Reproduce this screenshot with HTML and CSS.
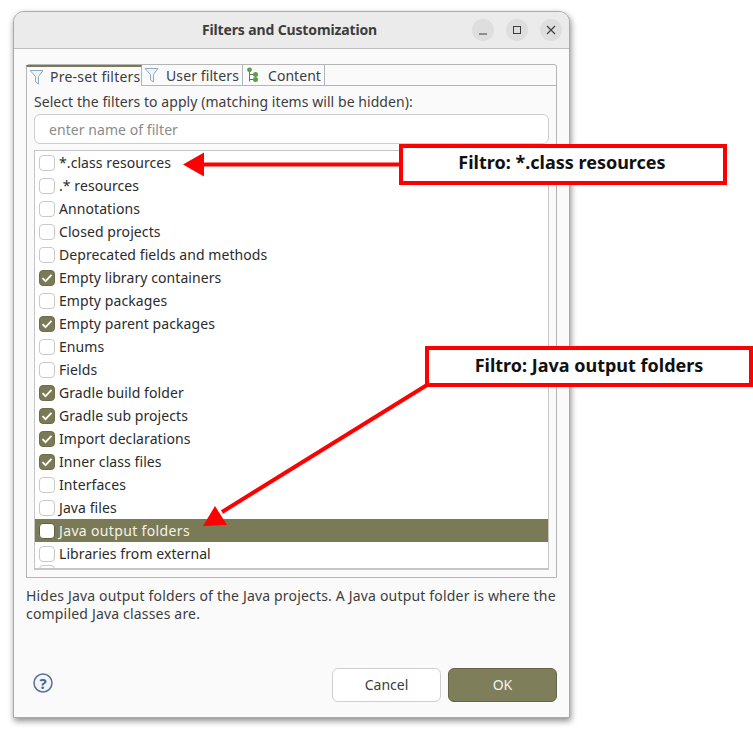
FILE: index.html
```html
<!DOCTYPE html>
<html lang="en">
<head>
<meta charset="utf-8">
<title>Filters and Customization</title>
<link rel="stylesheet" href="styles.css">
</head>
<body>
<div class="dialog">
  <header class="titlebar">
    <h1 class="title">Filters and Customization</h1>
    <div class="winbtns">
      <span class="winbtn"><svg width="12" height="12" viewBox="0 0 12 12"><path d="M2 10h8" stroke="#3d3d3d" stroke-width="1.2"/></svg></span>
      <span class="winbtn"><svg width="12" height="12" viewBox="0 0 12 12"><rect x="2.5" y="2.5" width="7" height="7" fill="none" stroke="#3d3d3d"/></svg></span>
      <span class="winbtn"><svg width="12" height="12" viewBox="0 0 12 12"><path d="M2 2l8 8M10 2l-8 8" stroke="#3d3d3d" stroke-width="1.1"/></svg></span>
    </div>
  </header>
  <main class="content">
    <section class="tabfolder">
      <div class="tabs">
        <div class="tab tab-active"><svg class="ticon" width="16" height="16" viewBox="0 0 16 16"><path d="M1 1.5h13L9.5 7.5v7.5l-3-2V7.5z" fill="#eef4fa" stroke="#8eabc4"/></svg>Pre-set filters</div>
        <div class="tab tab-user"><svg class="ticon" width="16" height="16" viewBox="0 0 16 16"><path d="M1 1.5h13L9.5 7.5v7.5l-3-2V7.5z" fill="#eef4fa" stroke="#8eabc4"/></svg>User filters</div>
        <div class="tab tab-content"><svg class="ticon ticon-tree" width="14" height="16" viewBox="0 0 14 16"><path d="M3.5 3v11.5M3.5 7.5h5M3.5 12.5h5" stroke="#6d6d6d" fill="none"/><circle cx="3.5" cy="2.8" r="2.4" fill="#5c9e46"/><circle cx="9.5" cy="7.5" r="2.5" fill="#5c9e46"/><circle cx="9.5" cy="12.5" r="2.5" fill="#5c9e46"/></svg>Content</div>
      </div>
      <div class="tabbody">
        <p class="prompt">Select the filters to apply (matching items will be hidden):</p>
        <input class="search" type="text" placeholder="enter name of filter">
        <ul class="list">
          <li class="row"><span class="cb"></span>*.class resources</li>
          <li class="row"><span class="cb"></span>.* resources</li>
          <li class="row"><span class="cb"></span>Annotations</li>
          <li class="row"><span class="cb"></span>Closed projects</li>
          <li class="row"><span class="cb"></span>Deprecated fields and methods</li>
          <li class="row"><span class="cb cb-on"><svg width="16" height="16" viewBox="0 0 16 16"><path d="M3.5 8.2l3 3 6-6.4" fill="none" stroke="#fff" stroke-width="1.8"/></svg></span>Empty library containers</li>
          <li class="row"><span class="cb"></span>Empty packages</li>
          <li class="row"><span class="cb cb-on"><svg width="16" height="16" viewBox="0 0 16 16"><path d="M3.5 8.2l3 3 6-6.4" fill="none" stroke="#fff" stroke-width="1.8"/></svg></span>Empty parent packages</li>
          <li class="row"><span class="cb"></span>Enums</li>
          <li class="row"><span class="cb"></span>Fields</li>
          <li class="row"><span class="cb cb-on"><svg width="16" height="16" viewBox="0 0 16 16"><path d="M3.5 8.2l3 3 6-6.4" fill="none" stroke="#fff" stroke-width="1.8"/></svg></span>Gradle build folder</li>
          <li class="row"><span class="cb cb-on"><svg width="16" height="16" viewBox="0 0 16 16"><path d="M3.5 8.2l3 3 6-6.4" fill="none" stroke="#fff" stroke-width="1.8"/></svg></span>Gradle sub projects</li>
          <li class="row"><span class="cb cb-on"><svg width="16" height="16" viewBox="0 0 16 16"><path d="M3.5 8.2l3 3 6-6.4" fill="none" stroke="#fff" stroke-width="1.8"/></svg></span>Import declarations</li>
          <li class="row"><span class="cb cb-on"><svg width="16" height="16" viewBox="0 0 16 16"><path d="M3.5 8.2l3 3 6-6.4" fill="none" stroke="#fff" stroke-width="1.8"/></svg></span>Inner class files</li>
          <li class="row"><span class="cb"></span>Interfaces</li>
          <li class="row"><span class="cb"></span>Java files</li>
          <li class="row row-selected"><span class="cb cb-sel"></span>Java output folders</li>
          <li class="row"><span class="cb"></span>Libraries from external</li>
          <li class="row row-cut"><span class="cb"></span></li>
        </ul>
      </div>
    </section>
    <p class="desc">Hides Java output folders of the Java projects. A Java output folder is where the compiled Java classes are.</p>
    <footer class="footer">
      <svg class="help" width="22" height="22" viewBox="0 0 22 22"><circle cx="11" cy="11" r="9" fill="#f4f5f8" stroke="#5a6f92" stroke-width="1.5"/><text x="11" y="16.5" text-anchor="middle" class="helpq">?</text></svg>
      <div class="actions">
        <button class="btn">Cancel</button>
        <button class="btn btn-ok">OK</button>
      </div>
    </footer>
  </main>
</div>
<svg class="overlay" width="753" height="734" viewBox="0 0 753 734">
  <path d="M400 164.5H203" stroke="#f00" stroke-width="4" fill="none"/>
  <path d="M183 164.5l21-12v24z" fill="#f00"/>
  <path d="M427 385L222 512" stroke="#f00" stroke-width="4" fill="none"/>
  <path d="M203 526l12-20 12 19z" fill="#f00"/>
</svg>
<div class="callout callout-a">Filtro: *.class resources</div>
<div class="callout callout-b">Filtro: Java output folders</div>
</body>
</html>
```
FILE: styles.css
```css
* { box-sizing: border-box; }
html, body { margin: 0; padding: 0; background: #fff; }
body { width: 753px; height: 734px; overflow: hidden; position: relative; font-family: "Noto Sans", sans-serif; font-size: 14px; color: #3d3d3d; padding: 11px 0 0 13px; }
.dialog { width: 557px; height: 707px; background: #fafafa; border: 1px solid #a9a9a9; border-radius: 11px 11px 0 0; box-shadow: 1px 3px 6px rgba(0,0,0,.45); display: flex; flex-direction: column; overflow: hidden; }
.titlebar { height: 37px; flex: none; background: #ebebeb; border-bottom: 1px solid #bdbdbd; padding-bottom: 2px; display: flex; align-items: center; justify-content: center; position: relative; }
.title { margin: 0; font-size: 14px; font-weight: 700; color: #3d3d3d; letter-spacing: -.14px; position: relative; left: -2px; }
.winbtns { position: absolute; right: 7px; top: 7px; display: flex; gap: 12px; }
.winbtn { width: 22px; height: 22px; border-radius: 50%; background: #dedede; display: flex; align-items: center; justify-content: center; }
.content { flex: 1; padding: 15px 12px 15px 12px; display: flex; flex-direction: column; }
.tabfolder { height: 514px; flex: none; border: 1px solid #b5b5b5; border-radius: 3px 3px 0 0; display: flex; flex-direction: column; }
.tabs { height: 21px; flex: none; display: flex; border-bottom: 1px solid #b5b5b5; margin-left: -1px; }
.tab { display: flex; align-items: center; height: 20px; padding: 0 2px; font-size: 14px; border-right: 1px solid #b5b5b5; white-space: nowrap; }
.tab-active { width: 116px; letter-spacing: .22px; border-top: 2px solid #7b7a57; border-left: 1px solid #b5b5b5; height: 21px; background: #fafafa; position: relative; z-index: 1; }
.tab-user { width: 101px; letter-spacing: .1px; }
.tab-content { width: 82px; letter-spacing: .05px; }
.ticon { flex: none; margin-right: 5px; }
.tab-user .ticon { margin-right: 6px; }
.tab-content .ticon { margin-right: 8px; }
.ticon-tree { margin-left: 1px; }
.tabbody { flex: 1; min-height: 0; padding: 6px 7px 7px 7px; display: flex; flex-direction: column; }
.prompt { margin: 0; height: 20px; line-height: 20px; font-size: 14px; letter-spacing: .06px; white-space: nowrap; }
.search { margin-top: 2px; height: 30px; flex: none; width: 100%; border: 1px solid #cdcdcd; border-radius: 6px; background: #fff; padding: 0 14px; font: 14px "Noto Sans", sans-serif; color: #3d3d3d; outline: none; letter-spacing: .06px; }
.search::placeholder { color: #8b8b8b; opacity: 1; }
.list { list-style: none; margin: 6px 0 0; padding: 0; flex: 1; min-height: 0; background: #fff; border: 1px solid #c6c6c6; border-bottom-width: 2px; overflow: hidden; }
.row { height: 23px; display: flex; align-items: center; padding-left: 4px; color: #2b2b2b; white-space: nowrap; letter-spacing: .08px; }
.row-selected { background: #7b7a57; color: #f3f3ea; letter-spacing: .35px; }
.row-cut { height: 5px; align-items: flex-start; }
.cb { width: 16px; height: 16px; border: 1px solid #c9c9c9; border-radius: 4px; background: #fff; margin-right: 4px; flex: none; display: block; }
.cb-on { background: #7b7a57; border-color: #6d6c4d; }
.cb-on svg { display: block; margin: -1px; }
.cb-sel { border-color: #5f5e42; }
.desc { margin: 9px 0 0; line-height: 18px; font-size: 14px; letter-spacing: .18px; color: #3d3d3d; height: 36px; }
.footer { margin-top: auto; display: flex; justify-content: space-between; align-items: center; }
.help { margin: 0 0 4px 6px; }
.helpq { font: 700 15px "Noto Sans", sans-serif; fill: #4e6488; }
.actions { display: flex; gap: 7px; }
.btn { width: 109px; height: 34px; border: 1px solid #cfcfcf; border-radius: 6px; background: #fff; font: 14px "Noto Sans", sans-serif; color: #3d3d3d; padding: 0 0 2px; }
.btn-ok { background: #7f7e5b; border-color: #66654a; color: #f4f4ec; }
.overlay { position: absolute; left: 0; top: 0; pointer-events: none; }
.callout { position: absolute; background: #fff; border: 4px solid #f00; padding-bottom: 3px; display: flex; align-items: center; justify-content: center; font: 700 18px "Noto Sans", "Open Sans", sans-serif; color: #111; white-space: nowrap; }
.callout-a { left: 399px; top: 144px; width: 328px; height: 41px; padding-bottom: 5px; padding-right: 2px; }
.callout-b { left: 425px; top: 346px; width: 328px; height: 41px; }
```
